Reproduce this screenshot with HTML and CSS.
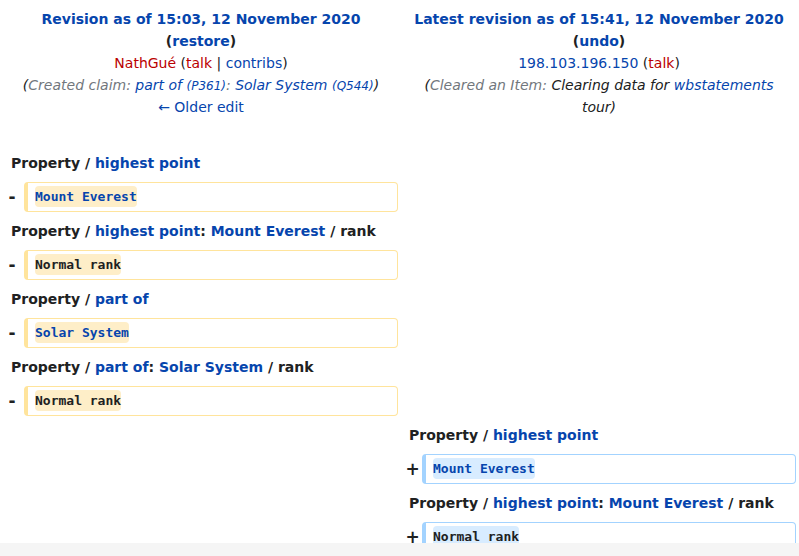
FILE: index.html
```html
<!DOCTYPE html>
<html lang="en">
<head>
<meta charset="utf-8">
<title>Diff</title>
<link rel="stylesheet" href="styles.css">
</head>
<body>
<div class="page">
  <div class="diff">
    <div class="title title-old">
      <div class="line"><a class="link strong" href="#">Revision as of 15:03, 12 November 2020</a></div>
      <div class="line strong">(<a class="link" href="#">restore</a>)</div>
      <div class="line"><a class="new" href="#">NathGué</a> (<a class="new" href="#">talk</a> | <a class="link" href="#">contribs</a>)</div>
      <div class="line comment">(<span class="auto">Created claim: </span><a class="link" href="#">part of</a> <span class="small"><a class="link" href="#">(P361)</a></span><span class="auto">: </span><a class="link" href="#">Solar System</a> <span class="small"><a class="link" href="#">(Q544)</a></span>)</div>
      <div class="line"><a class="link" href="#">← Older edit</a></div>
    </div>
    <div class="title title-new">
      <div class="line"><a class="link strong" href="#">Latest revision as of 15:41, 12 November 2020</a></div>
      <div class="line strong">(<a class="link" href="#">undo</a>)</div>
      <div class="line"><a class="link" href="#">198.103.196.150</a> (<a class="new" href="#">talk</a>)</div>
      <div class="line comment">(<span class="auto">Cleared an Item: </span>Clearing data for <a class="link" href="#">wbstatements</a> tour)</div>
    </div>

    <div class="spacer"></div>

    <div class="lineno left">Property / <a class="link" href="#">highest point</a></div>
    <div class="lineno right"></div>
    <div class="marker left">-</div>
    <div class="content del"><span class="change">Mount Everest</span></div>
    <div class="marker right"></div>
    <div class="content empty"></div>

    <div class="lineno left">Property / <a class="link" href="#">highest point</a>: <a class="link" href="#">Mount Everest</a> / rank</div>
    <div class="lineno right"></div>
    <div class="marker left">-</div>
    <div class="content del"><span class="change plain">Normal rank</span></div>
    <div class="marker right"></div>
    <div class="content empty"></div>

    <div class="lineno left">Property / <a class="link" href="#">part of</a></div>
    <div class="lineno right"></div>
    <div class="marker left">-</div>
    <div class="content del"><span class="change">Solar System</span></div>
    <div class="marker right"></div>
    <div class="content empty"></div>

    <div class="lineno left">Property / <a class="link" href="#">part of</a>: <a class="link" href="#">Solar System</a> / rank</div>
    <div class="lineno right"></div>
    <div class="marker left">-</div>
    <div class="content del"><span class="change plain">Normal rank</span></div>
    <div class="marker right"></div>
    <div class="content empty"></div>

    <div class="lineno left"></div>
    <div class="lineno right">Property / <a class="link" href="#">highest point</a></div>
    <div class="marker left"></div>
    <div class="content empty"></div>
    <div class="marker right">+</div>
    <div class="content add"><span class="change">Mount Everest</span></div>

    <div class="lineno left"></div>
    <div class="lineno right">Property / <a class="link" href="#">highest point</a>: <a class="link" href="#">Mount Everest</a> / rank</div>
    <div class="marker left"></div>
    <div class="content empty"></div>
    <div class="marker right">+</div>
    <div class="content add"><span class="change plain">Normal rank</span></div>
  </div>
</div>
</body>
</html>
```

FILE: styles.css
```css
html, body {
  margin: 0;
  padding: 0;
}
body {
  background: #f5f5f5;
  font-family: "DejaVu Sans", sans-serif;
  font-size: 14px;
  color: #202122;
}
.page {
  height: 543px;
  overflow: hidden;
  background: #fff;
}
.diff {
  display: grid;
  grid-template-columns: 24px 374px 24px 374px;
}
a {
  text-decoration: none;
}
.link { color: #0645ad; }
.new { color: #ba0000; }
.strong { font-weight: bold; }

.title {
  grid-column: span 2;
  text-align: center;
  padding: 8px 6px 0 10px;
  line-height: 22px;
}
.title-new {
  padding: 8px 2px 0 6px;
}
.line {
  height: 22px;
}
.title-new .comment {
  height: auto;
}
.comment {
  font-style: italic;
  padding: 0 12px;
}
.auto { color: #72777d; }
.small {
  font-size: 12px;
  line-height: 1;
}

.spacer {
  grid-column: 1 / -1;
  height: 26px;
}

.lineno {
  grid-column: span 2;
  font-weight: bold;
  line-height: 22px;
  padding: 8px 0 8px 11px;
  white-space: nowrap;
}
.marker {
  font-weight: bold;
  font-size: 17px;
  text-align: center;
  line-height: 30px;
}
.marker.right {
  padding-left: 5px;
}
.content {
  box-sizing: border-box;
  height: 30px;
  border-radius: 4px;
  padding: 3px 6px 0 7px;
}
.content.del {
  border: 1px solid #ffe49c;
  border-left-width: 4px;
}
.content.add {
  border: 1px solid #a3d3ff;
  border-left-width: 4px;
}
.change {
  display: inline-block;
  font-family: "DejaVu Sans Mono", monospace;
  font-size: 13px;
  font-weight: bold;
  line-height: 21px;
  border-radius: 4px;
  color: #0645ad;
}
.change.plain {
  color: #202122;
}
.del .change { background: #feeec8; }
.add .change { background: #d8ecff; }
```
